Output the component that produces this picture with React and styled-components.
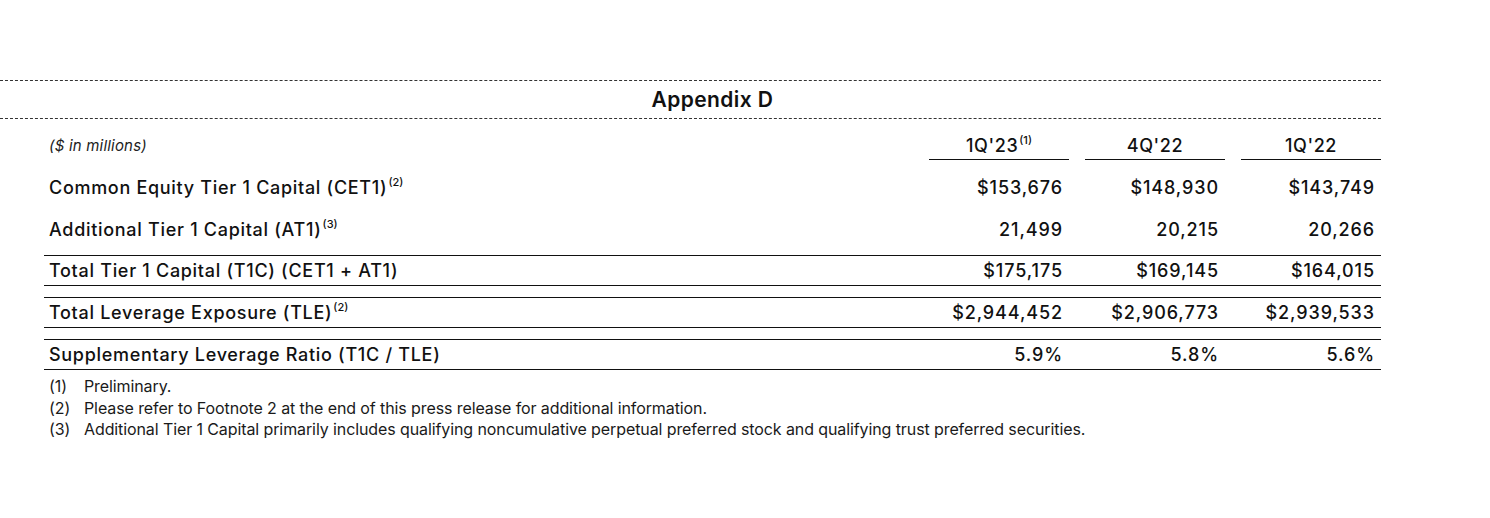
import React from 'react';
import styled, { createGlobalStyle } from 'styled-components';

const GlobalStyle = createGlobalStyle`
  html, body {
    margin: 0;
    padding: 0;
    background: #fff;
  }
  body {
    font-family: Inter, "Noto Sans", sans-serif;
    color: #111;
  }
`;

const Page = styled.div`
  width: 1490px;
  height: 518px;
  padding-top: 80px;
  box-sizing: border-box;
`;

const Sheet = styled.div`
  width: 1381px;
`;

const TitleBand = styled.div`
  border-top: 1px dashed #333;
  border-bottom: 1px dashed #333;
  height: 37px;
  display: flex;
  align-items: center;
  justify-content: center;
  padding-left: 44px;
  font-size: 21px;
  font-weight: 600;
  letter-spacing: 0.4px;
`;

const Table = styled.div`
  margin-left: 44px;
  display: flex;
  flex-direction: column;
`;

const Row = styled.div`
  display: grid;
  grid-template-columns: 1fr 140px 140px 140px;
  column-gap: 16px;
  align-items: center;
  height: ${p => p.$height || 29}px;
  margin-top: ${p => p.$gap || 0}px;
  border-top: ${p => (p.$ruled ? '1px solid #111' : 'none')};
  border-bottom: ${p => (p.$ruled ? '1px solid #111' : 'none')};
`;

const HeadRow = styled(Row)`
  align-items: stretch;
`;

const Units = styled.div`
  align-self: end;
  padding: 0 0 5px 5px;
  font-size: 15px;
  font-style: italic;
  letter-spacing: 0.2px;
  color: #222;
`;

const ColHead = styled.div`
  display: flex;
  align-items: flex-end;
  justify-content: center;
  padding-bottom: 3px;
  border-bottom: 1px solid #111;
  font-size: 18px;
  font-weight: 500;
  letter-spacing: 0.6px;
`;

const Label = styled.div`
  padding-left: 5px;
  font-size: 18px;
  font-weight: 550;
  letter-spacing: 0.7px;
  white-space: nowrap;
`;

const Num = styled.div`
  text-align: right;
  padding-right: 6px;
  font-size: 18px;
  font-weight: 500;
  letter-spacing: 0.9px;
`;

const Sup = styled.sup`
  font-size: 11px;
  font-weight: 500;
  letter-spacing: 0;
  vertical-align: 8px;
  line-height: 0;
  margin-left: 1px;
`;

const Notes = styled.ol`
  list-style: none;
  margin: 6px 0 0 49px;
  padding: 0;
  font-size: 16px;
  line-height: 21.5px;
  color: #1a1a1a;
  letter-spacing: -0.1px;
`;

const Note = styled.li`
  display: flex;
`;

const NoteMark = styled.span`
  width: 35px;
  flex: none;
`;

const rows = [
  { label: 'Common Equity Tier 1 Capital (CET1)', note: 2, values: ['$153,676', '$148,930', '$143,749'], gap: 13 },
  { label: 'Additional Tier 1 Capital (AT1)', note: 3, values: ['21,499', '20,215', '20,266'], gap: 13 },
  { label: 'Total Tier 1 Capital (T1C) (CET1 + AT1)', values: ['$175,175', '$169,145', '$164,015'], gap: 11, ruled: true },
  { label: 'Total Leverage Exposure (TLE)', note: 2, values: ['$2,944,452', '$2,906,773', '$2,939,533'], gap: 11, ruled: true },
  { label: 'Supplementary Leverage Ratio (T1C / TLE)', values: ['5.9%', '5.8%', '5.6%'], gap: 11, ruled: true },
];

const notes = [
  'Preliminary.',
  'Please refer to Footnote 2 at the end of this press release for additional information.',
  'Additional Tier 1 Capital primarily includes qualifying noncumulative perpetual preferred stock and qualifying trust preferred securities.',
];

export default function App() {
  return (
    <Page>
      <GlobalStyle />
      <Sheet>
        <TitleBand>Appendix D</TitleBand>
        <Table>
          <HeadRow $height={41}>
            <Units>($ in millions)</Units>
            <ColHead><span>1Q'23<Sup>(1)</Sup></span></ColHead>
            <ColHead><span>4Q'22</span></ColHead>
            <ColHead><span>1Q'22</span></ColHead>
          </HeadRow>
          {rows.map(r => (
            <Row key={r.label} $gap={r.gap} $ruled={r.ruled}>
              <Label>
                {r.label}
                {r.note && <Sup>({r.note})</Sup>}
              </Label>
              {r.values.map((v, i) => (
                <Num key={i}>{v}</Num>
              ))}
            </Row>
          ))}
        </Table>
        <Notes>
          {notes.map((n, i) => (
            <Note key={i}>
              <NoteMark>({i + 1})</NoteMark>
              {n}
            </Note>
          ))}
        </Notes>
      </Sheet>
    </Page>
  );
}
